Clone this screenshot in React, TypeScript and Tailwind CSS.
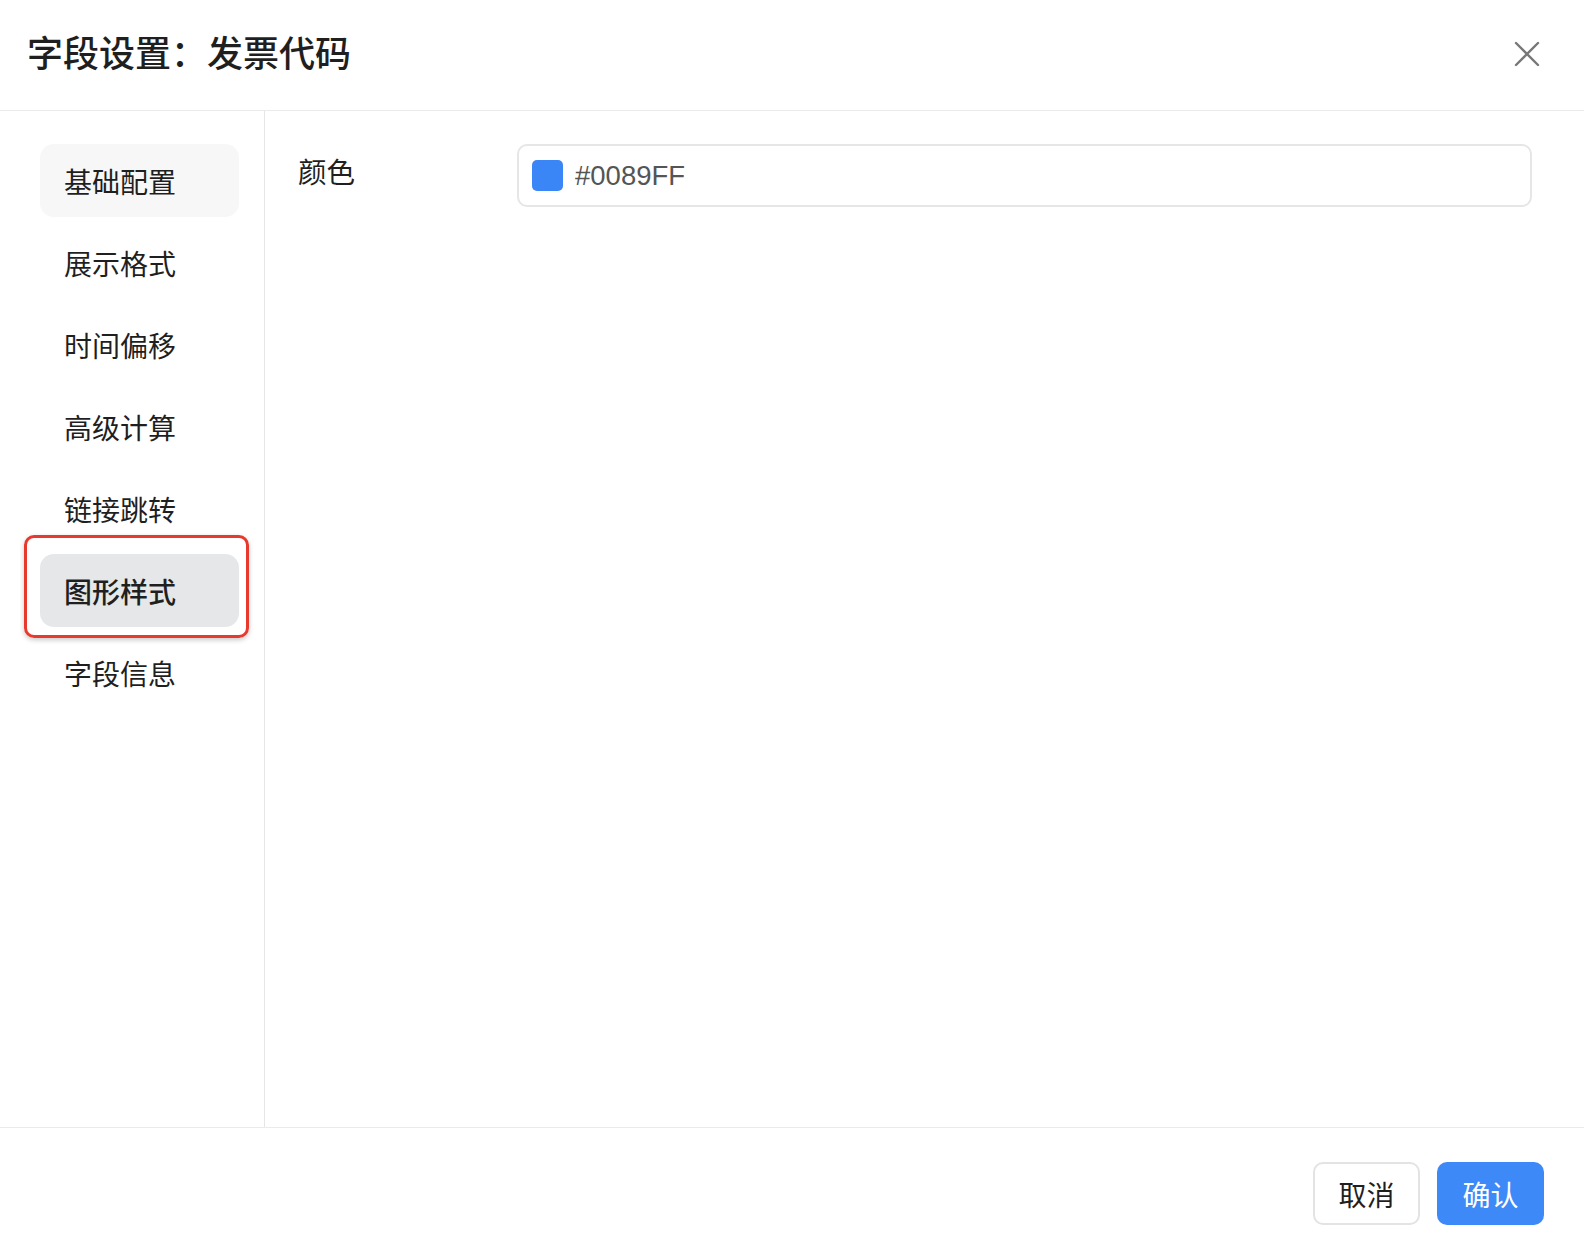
const menu = ["基础配置", "展示格式", "时间偏移", "高级计算", "链接跳转", "图形样式", "字段信息"]

function CloseIcon() {
  return (
    <svg width="26" height="26" viewBox="0 0 26 26" fill="none" stroke="currentColor" strokeWidth="2.4" strokeLinecap="round">
      <path d="M2 2L24 24M24 2L2 24" />
    </svg>
  )
}

export default function App() {
  const active = "图形样式"

  return (
    <div
      className="flex h-[1242px] w-full flex-col bg-white text-[#1f1f1f]"
      style={{ fontFamily: '"Noto Sans CJK SC", "Noto Sans", sans-serif' }}
    >
      {/* 标题栏 */}
      <header className="flex h-[111px] shrink-0 items-center justify-between border-b border-[#ebebeb] pl-[27px] pr-[44px]">
        <h1 className="pb-[8px] text-[36px] font-medium leading-none">字段设置：发票代码</h1>
        <button className="pb-[2px] text-[#777777]">
          <CloseIcon />
        </button>
      </header>

      <div className="flex min-h-0 flex-1">
        {/* 左侧菜单 */}
        <nav className="flex w-[265px] shrink-0 flex-col gap-[9px] border-r border-[#e6e6e6] pl-[40px] pr-[25px] pt-[33px]">
          {menu.map((item, i) => (
            <div
              key={item}
              className={
                "relative flex h-[73px] items-center rounded-[14px] pl-[24px] text-[28px] " +
                (item === active ? "bg-[#e6e7e9] font-medium" : i === 0 ? "bg-[#f7f7f7]" : "")
              }
            >
              {item}
              {item === active && (
                <div className="pointer-events-none absolute -bottom-[11px] -left-[16px] -right-[10px] -top-[19px] rounded-[10px] border-[3px] border-[#e8392e] shadow-[0_2px_5px_rgba(0,0,0,0.22)]" />
              )}
            </div>
          ))}
        </nav>

        {/* 内容区 */}
        <main className="flex-1 pl-[33px] pr-[52px] pt-[33px]">
          <div className="flex items-start">
            <label className="w-[219px] shrink-0 pt-[7px] text-[28.5px] leading-[40px]">颜色</label>
            <div className="flex h-[63px] flex-1 items-center gap-[12px] rounded-[10px] border-2 border-[#e6e6e6] pl-[13px]">
              <span className="h-[31px] w-[31px] rounded-[5px] bg-[#3b86f7]" />
              <span
                className="text-[27.5px] text-[#555555]"
                style={{ fontFamily: '"Liberation Sans", Arial, sans-serif' }}
              >
                #0089FF
              </span>
            </div>
          </div>
        </main>
      </div>

      {/* 底部按钮 */}
      <footer className="flex h-[115px] shrink-0 items-start justify-end gap-[17px] border-t border-[#ebebeb] pr-[40px] pt-[34px]">
        <button className="flex h-[63px] w-[107px] items-center justify-center rounded-[10px] border-2 border-[#e3e3e3] bg-white text-[28px]">
          取消
        </button>
        <button className="flex h-[63px] w-[107px] items-center justify-center rounded-[10px] bg-[#3d89f7] text-[28px] text-white">
          确认
        </button>
      </footer>
    </div>
  )
}
